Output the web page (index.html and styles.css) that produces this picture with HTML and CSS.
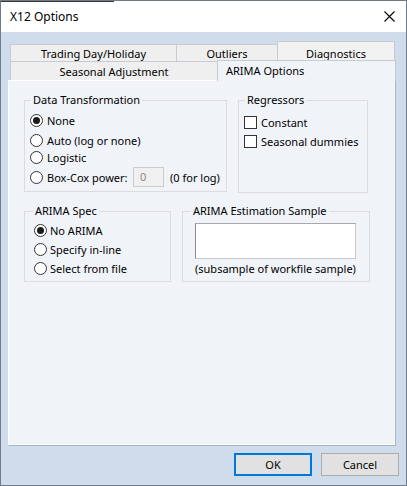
FILE: index.html
```html
<!DOCTYPE html>
<html>
<head>
<meta charset="utf-8">
<link rel="stylesheet" href="styles.css">
</head>
<body>
<div class="window">
  <div class="titlebar">
    <span class="title">X12 Options</span>
    <svg class="close" width="11" height="11" viewBox="0 0 11 11"><path d="M0.5 0.5L10.5 10.5M10.5 0.5L0.5 10.5" stroke="#000" stroke-width="1.1" fill="none"/></svg>
  </div>
  <div class="body">
    <div class="tabrow row1">
      <div class="tab t-trading">Trading Day/Holiday</div>
      <div class="tab t-outliers">Outliers</div>
      <div class="tab t-diag">Diagnostics</div>
    </div>
    <div class="tabrow row2">
      <div class="tab t-seasonal">Seasonal Adjustment</div>
      <div class="tab t-arima active">ARIMA Options</div>
    </div>
    <div class="panel">
      <div class="grouprow r1">
        <fieldset class="group g-dt">
          <legend>Data Transformation</legend>
          <div class="opt o-none"><span class="radio checked"></span><span>None</span></div>
          <div class="opt o-auto"><span class="radio"></span><span>Auto (log or none)</span></div>
          <div class="opt o-logistic"><span class="radio"></span><span>Logistic</span></div>
          <div class="opt o-boxcox"><span class="radio"></span><span class="bc-label">Box-Cox power:</span><span class="bc-input">0</span><span class="bc-note">(0 for log)</span></div>
        </fieldset>
        <fieldset class="group g-reg">
          <legend>Regressors</legend>
          <div class="opt o-const"><span class="check"></span><span>Constant</span></div>
          <div class="opt o-seas"><span class="check"></span><span>Seasonal dummies</span></div>
        </fieldset>
      </div>
      <div class="grouprow r2">
        <fieldset class="group g-spec">
          <legend>ARIMA Spec</legend>
          <div class="opt o-s1"><span class="radio checked"></span><span>No ARIMA</span></div>
          <div class="opt o-s2"><span class="radio"></span><span>Specify in-line</span></div>
          <div class="opt o-s3"><span class="radio"></span><span>Select from file</span></div>
        </fieldset>
        <fieldset class="group g-est">
          <legend>ARIMA Estimation Sample</legend>
          <div class="edit"></div>
          <div class="opt caption">(subsample of workfile sample)</div>
        </fieldset>
      </div>
    </div>
    <div class="buttons">
      <button class="btn default">OK</button>
      <button class="btn">Cancel</button>
    </div>
  </div>
</div>
</body>
</html>
```
FILE: styles.css
```css
* { box-sizing: border-box; }
html, body { margin: 0; padding: 0; }
body {
  width: 407px;
  height: 486px;
  font-family: "Noto Sans", "Open Sans", sans-serif;
  font-size: 11px;
  color: #000;
  overflow: hidden;
}
.window {
  width: 407px;
  height: 486px;
  border: 1px solid #6f7b8a;
  background: #cfdcec;
  display: flex;
  flex-direction: column;
}
.titlebar {
  height: 31px;
  flex: none;
  background: linear-gradient(#3a3a3a, #3a3a3a) 0 0 / 113px 1px no-repeat, #fff;
  display: flex;
  align-items: center;
  padding-left: 9px;
}
.title { font-size: 12px; }
.close { margin-left: auto; margin-right: 11px; }
.body {
  flex: 1;
  padding: 9px 0 0 7px;
}
.tabrow { display: flex; margin-left: 2px; }
.row1 { height: 20px; align-items: flex-end; }
.row2 { height: 19px; align-items: flex-start; }
.tab {
  border: 1px solid #c8ccd2;
  border-bottom: none;
  background: #efefef;
  display: flex;
  align-items: center;
  justify-content: center;
  line-height: 15px;
}
.tab + .tab { margin-left: -1px; }
.t-trading { width: 167px; height: 17px; }
.t-outliers { width: 102px; height: 17px; }
.t-diag { width: 118px; height: 20px; padding-top: 3px; background: #f2f2f2; }
.t-seasonal { width: 208px; height: 19px; }
.t-arima { width: 179px; justify-content: flex-start; padding-left: 8px; }
.active {
  height: 21px;
  margin-top: -1px;
  background: #f0f4f9;
  position: relative;
  z-index: 1;
  padding-bottom: 2px;
}
.panel {
  width: 388px;
  height: 366px;
  background: #f0f4f9;
  border: 1px solid #fff;
  border-right-color: #a9b4c2;
  border-bottom-color: #a9b4c2;
  box-shadow: inset -1px -1px 0 #fcfdfe;
  padding: 11px 0 0 15px;
}
.grouprow { display: flex; }
.r1 { gap: 11px; }
.r2 { gap: 11px; margin-top: 10px; }
.group {
  margin: 0;
  padding: 0;
  border: 1px solid #dcdcdc;
  min-width: 0;
}
.group legend {
  padding: 0 2px;
  margin-left: 6px;
  line-height: 16px;
}
.r2 .group legend { margin-left: 8px; }
.g-dt { width: 203px; height: 100px; }
.g-reg { width: 130px; height: 101px; }
.g-spec { width: 147px; height: 79px; }
.g-est { width: 188px; height: 79px; }
.opt {
  display: flex;
  align-items: center;
  height: 17px;
  white-space: nowrap;
}
.radio {
  width: 13px;
  height: 13px;
  border: 1px solid #333;
  border-radius: 50%;
  background: #fff;
  margin-left: 5px;
  margin-right: 4px;
  flex: none;
  display: flex;
  align-items: center;
  justify-content: center;
}
.radio.checked::after {
  content: "";
  width: 7px;
  height: 7px;
  border-radius: 50%;
  background: #1a1a1a;
}
.check {
  width: 13px;
  height: 13px;
  border: 1px solid #333;
  background: #fff;
  margin-left: 5px;
  margin-right: 4px;
  flex: none;
}
.o-none { margin-top: 4px; }
.o-auto { margin-top: 3px; }
.o-logistic { margin-top: 0; }
.o-boxcox { margin-top: 1px; height: 20px; }
.bc-label { width: 86px; }
.bc-input {
  width: 31px;
  height: 20px;
  border: 1px solid #cccccc;
  background: #f0f0f0;
  color: #8a8a8a;
  padding-left: 6px;
  line-height: 18px;
}
.bc-note { margin-left: 6px; }
.o-const { margin-top: 6px; }
.o-seas { margin-top: 2px; }
.g-spec .radio { margin-left: 9px; margin-right: 3px; }
.o-s1 { margin-top: 3px; }
.o-s2 { margin-top: 2px; }
.o-s3 { margin-top: 2px; }
.edit {
  width: 161px;
  height: 36px;
  margin: 4px 0 0 12px;
  background: #fff;
  border: 1px solid #c9c9c9;
  border-left-color: #8e8e8e;
  border-top-color: #a8a8a8;
}
.caption { margin: 1px 0 0 12px; }
.buttons {
  display: flex;
  justify-content: flex-end;
  gap: 9px;
  margin-top: 7px;
  padding-right: 7px;
}
.btn {
  width: 78px;
  height: 23px;
  font-family: inherit;
  font-size: 11px;
  background: #e1e1e1;
  border: 1px solid #adadad;
  border-radius: 0;
  padding: 0;
  color: #000;
}
.btn.default {
  border-color: #0078d7;
  box-shadow: inset 0 0 0 1px #0078d7;
}
```
